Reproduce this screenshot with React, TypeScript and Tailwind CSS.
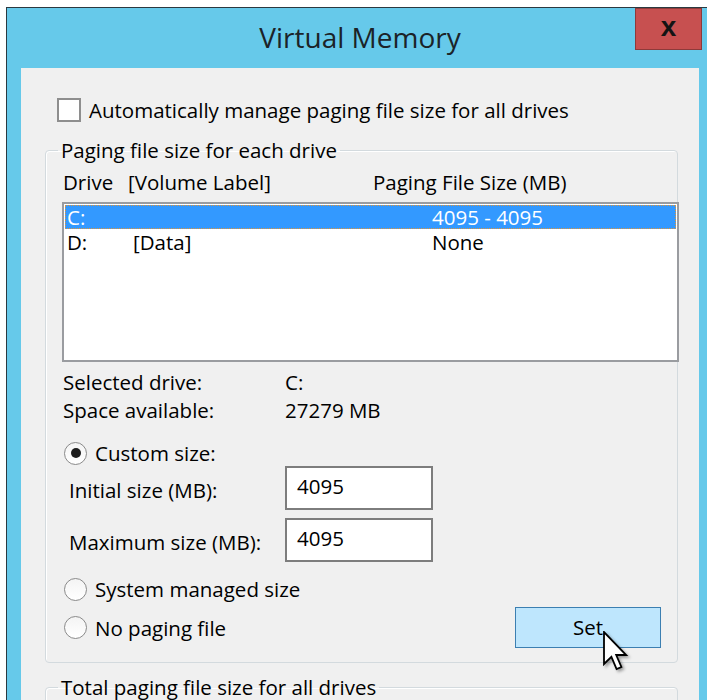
import React from "react";

const FONT = { fontFamily: '"Open Sans", "Noto Sans", Arial, sans-serif' };

function Radio({ checked, label }: { checked?: boolean; label: string }) {
  return (
    <div className="flex h-[28px] items-center pl-[2px]">
      <span className="flex h-[23px] w-[23px] items-center justify-center rounded-full border border-[#8a8a8a] bg-gradient-to-b from-[#f4f4f4] to-white">
        {checked && <span className="h-[10px] w-[10px] rounded-full bg-[#1c1c1c]" />}
      </span>
      <span className="ml-[8px]">{label}</span>
    </div>
  );
}

function SizeField({ label, value }: { label: string; value: string }) {
  return (
    <div className="flex h-[44px] items-center pl-[7px]">
      <span className="w-[216px] pt-[4px]">{label}</span>
      <div className="flex h-[44px] w-[148px] items-start border-2 border-[#7d7d7d] bg-white pl-[10px] pt-[5px]">
        {value}
      </div>
    </div>
  );
}

function Cursor() {
  return (
    <svg
      className="absolute left-[603px] top-[631px]"
      width="30"
      height="46"
      viewBox="0 0 15 23"
      style={{ filter: "drop-shadow(2px 2px 1.5px rgba(0,0,0,0.35))" }}
    >
      <path
        d="M0.5 0.5 L0.5 16.5 L4.2 12.9 L6.8 19 L9.2 18 L6.6 12 L11.6 12 Z"
        fill="#ffffff"
        stroke="#000000"
        strokeWidth="0.9"
        strokeLinejoin="miter"
      />
    </svg>
  );
}

export default function App() {
  return (
    <div className="relative h-[700px] w-[707px] overflow-hidden bg-white text-[20.5px] leading-[26px] text-black" style={FONT}>
      {/* window frame */}
      <div className="relative ml-[6px] mt-[7px] h-[740px] w-[701px] border-l border-t border-[#2b3940] bg-[#66c9ea] pl-[14px] pr-[8px]">
        <div className="flex h-[60px] items-center justify-center">
          <span className="mt-[-3px] text-[28px] leading-[36px] text-[#1b2328]">Virtual Memory</span>
        </div>
        <div className="absolute right-[5px] top-0 flex h-[42px] w-[67px] items-center justify-center border border-[#8e3a3a] bg-[#c75050]">
          <span
            className="mt-[-4px] text-[28px] font-bold leading-[28px] text-[#141414]"
            style={{ fontFamily: '"Liberation Sans", Arial, sans-serif' }}
          >
            x
          </span>
        </div>

        {/* dialog body */}
        <div className="h-[700px] bg-[#f0f0f0] pt-[29px]">
          <div className="flex h-[26px] items-center pl-[36px]">
            <span className="h-[24px] w-[24px] border-2 border-[#8e8e8e] bg-white" />
            <span className="ml-[8px]">Automatically manage paging file size for all drives</span>
          </div>

          <fieldset className="ml-[24px] mt-[14px] w-[633px] min-w-0 rounded-[4px] border border-[#d3dade] pb-[14px] pl-[16px] pr-[16px] shadow-[inset_1px_1px_0_#ffffff]">
            <legend className="ml-[-4px] px-[3px] leading-[26px]">Paging file size for each drive</legend>

            <div className="mt-[7px] flex h-[24px] items-center pl-[1px]">
              <span className="w-[65px]">Drive</span>
              <span className="w-[245px]">[Volume Label]</span>
              <span>Paging File Size (MB)</span>
            </div>

            <div className="mt-[8px] h-[160px] w-[617px] border-2 border-[#9a9ca0] bg-white pl-[1px] pr-[1px] pt-[1px] leading-[22px]">
              <div className="flex h-[24px] items-center border border-dotted border-[#e0953a] bg-[#3399ff] pl-[1px] text-white">
                <span className="w-[66px]">C:</span>
                <span className="w-[299px]" />
                <span>4095 - 4095</span>
              </div>
              <div className="flex h-[26px] items-center pl-[2px]">
                <span className="w-[66px]">D:</span>
                <span className="w-[299px]">[Data]</span>
                <span>None</span>
              </div>
            </div>

            <div className="mt-[6px] pl-[1px]">
              <div className="flex h-[28px] items-center">
                <span className="w-[222px]">Selected drive:</span>
                <span>C:</span>
              </div>
              <div className="flex h-[28px] items-center">
                <span className="w-[222px]">Space available:</span>
                <span>27279 MB</span>
              </div>
            </div>

            <div className="mt-[15px]">
              <Radio checked label="Custom size:" />
            </div>
            <div className="mt-[-1px]">
              <SizeField label="Initial size (MB):" value="4095" />
            </div>
            <div className="mt-[8px]">
              <SizeField label="Maximum size (MB):" value="4095" />
            </div>
            <div className="mt-[13px]">
              <Radio label="System managed size" />
            </div>
            <div className="mt-[4px] flex h-[41px] items-center justify-between">
              <Radio label="No paging file" />
              <button className="flex h-[41px] w-[146px] items-center justify-center border border-[#3c7fb1] bg-[#bee6fd] pb-[1px]">
                Set
              </button>
            </div>
          </fieldset>

          <fieldset className="ml-[24px] mt-[11px] h-[80px] w-[633px] min-w-0 rounded-[4px] border border-[#d3dade] pl-[16px] pr-[16px] shadow-[inset_1px_1px_0_#ffffff]">
            <legend className="ml-[-4px] px-[3px] leading-[26px]">Total paging file size for all drives</legend>
          </fieldset>
        </div>
      </div>
      <Cursor />
    </div>
  );
}
